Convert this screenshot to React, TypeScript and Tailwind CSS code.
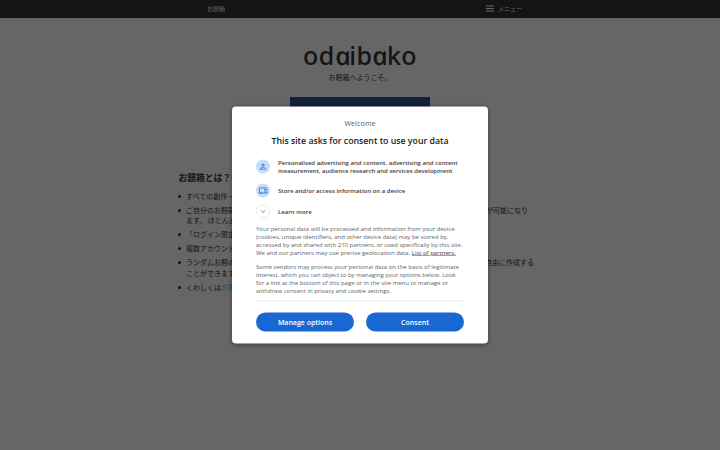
import type { ReactNode } from 'react';

const bodyLines = [
  'Your personal data will be processed and information from your device',
  '(cookies, unique identifiers, and other device data) may be stored by,',
  'accessed by and shared with 210 partners, or used specifically by this site.',
];

const vendorLines = [
  'Some vendors may process your personal data on the basis of legitimate',
  'interest, which you can object to by managing your options below. Look',
  'for a link at the bottom of this page or in the site menu to manage or',
  'withdraw consent in privacy and cookie settings.',
];

export default function App() {
  return (
    <div className="relative w-[720px] h-[450px] overflow-hidden bg-[#666666] font-['Open_Sans','Noto_Sans_CJK_JP',sans-serif]">
      <TopBar />

      <main className="flex flex-col items-center font-['Noto_Sans_CJK_JP',sans-serif] text-[#141414]">
        <Logo />
        <p className="mt-px text-[7px] leading-[10px]">お題箱へようこそ。</p>
        <div className="mt-[14.5px] w-[140px] h-[20px] bg-[#141f38]" />
        <About />
      </main>

      <div className="absolute inset-0 flex items-center justify-center">
        <ConsentDialog />
      </div>
    </div>
  );
}

function TopBar() {
  return (
    <header className="h-[17.5px] bg-[#141414] font-['Noto_Sans_CJK_JP',sans-serif] text-[#6b6b6b] text-[6px] leading-[17px] flex justify-between pl-[207px] pr-[198px]">
      <span>お題箱</span>
      <span className="flex items-center gap-[4px]">
        <svg width="8" height="7" viewBox="0 0 8 7" stroke="#6b6b6b" strokeWidth="1.1">
          <path d="M0 1h8M0 3.5h8M0 6h8" />
        </svg>
        メニュー
      </span>
    </header>
  );
}

function Logo() {
  // the upright single-storey "a" comes from the italic, skewed back
  const a = <span className="inline-block italic skew-x-[12deg] scale-x-[1.08]">a</span>;
  return (
    <h1 className="mt-[21.5px] h-[32px] leading-[32px] text-[25px] font-['Noto_Sans',sans-serif] font-medium whitespace-nowrap tracking-[0.35px]">
      od{a}ib{a}ko
    </h1>
  );
}

function About() {
  return (
    <section className="mt-[54.5px] w-[363px] text-[7px] leading-[10.4px] whitespace-nowrap">
      <h2 className="text-[8.75px] leading-[13px] font-bold">お題箱とは？</h2>
      <ul className="mt-[6.5px] ml-[7.5px] space-y-[3.65px]">
        <Item>すべての創作・</Item>
        <Item>
          <Split left="ご自分のお題箱" right="が可能になり" width="w-[342px]" />
          ます。 ほとんど
        </Item>
        <Item>「ログイン限定</Item>
        <Item>複数アカウント</Item>
        <Item>
          <Split left="ランダムお題の" right="自由に作成する" width="w-[348px]" />
          ことができます
        </Item>
        <Item>
          くわしくは<span className="text-[#0b5480]">お題箱</span>
        </Item>
      </ul>
    </section>
  );
}

function Item({ children }: { children: ReactNode }) {
  return (
    <li className="relative">
      <span className="absolute -left-[8.5px] top-[4px] size-[3px] rounded-full bg-[#141414]" />
      {children}
    </li>
  );
}

function Split({ left, right, width }: { left: string; right: string; width: string }) {
  return (
    <div className={`flex justify-between ${width}`}>
      <span>{left}</span>
      <span>{right}</span>
    </div>
  );
}

// laid out at double size and scaled down, so the small type keeps its spacing
function ConsentDialog() {
  return (
    <div className="shrink-0 scale-50 w-[512px] h-[474px] px-[48px] bg-white rounded-[8px] shadow-[0_2px_8px_rgba(0,0,0,0.4)] whitespace-nowrap">
      <p className="pt-[24px] text-center text-[14px] leading-[20px] tracking-[0.3px] text-[#55595e]">Welcome</p>
      <h2 className="mt-[11px] text-center text-[17.5px] leading-[24px] font-semibold text-[#202124]">
        This site asks for consent to use your data
      </h2>

      <div className="mt-[24px] text-[12px] leading-[16px] font-semibold text-[#3c4043]">
        <div className="h-[34px] flex items-center gap-[16px]">
          <span className="size-[28px] rounded-full bg-[#c6dcfa] flex items-center justify-center">
            <PersonIcon />
          </span>
          <p>
            Personalised advertising and content, advertising and content
            <br />
            measurement, audience research and services development
          </p>
        </div>
        <div className="mt-[17px] h-[28px] flex items-center gap-[16px]">
          <span className="size-[28px] rounded-full bg-[#c6dcfa] flex items-center justify-center">
            <DevicesIcon />
          </span>
          <p>Store and/or access information on a device</p>
        </div>
        <div className="mt-[14px] h-[28px] flex items-center gap-[16px]">
          <span className="size-[28px] rounded-full border-2 border-[#e8eaed] flex items-center justify-center">
            <svg width="12" height="12" viewBox="0 0 6 6" fill="none" stroke="#5f6368" strokeWidth="0.8">
              <path d="M1 2l2 2 2-2" />
            </svg>
          </span>
          <p>Learn more</p>
        </div>
      </div>

      <div className="mt-[12px] text-[12px] leading-[16px] text-[#5f6368]">
        {bodyLines.map((line) => (
          <p key={line}>{line}</p>
        ))}
        <p>
          We and our partners may use precise geolocation data.{' '}
          <a className="font-medium underline text-[#3c4043]">List of partners.</a>
        </p>
        <div className="mt-[12px]">
          {vendorLines.map((line) => (
            <p key={line}>{line}</p>
          ))}
        </div>
      </div>

      <div className="mt-[12px] h-[2px] bg-[#e8eaed]" />

      <div className="mt-[22px] flex gap-[24px] text-[14px] leading-[38px] font-semibold text-white">
        <button className="flex-1 h-[38px] rounded-full bg-[#1967d2]">Manage options</button>
        <button className="flex-1 h-[38px] rounded-full bg-[#1967d2]">Consent</button>
      </div>
    </div>
  );
}

function PersonIcon() {
  return (
    <svg width="18" height="18" viewBox="0 0 24 24" fill="#1967d2">
      <path d="M12 5.9a2.1 2.1 0 1 1 0 4.2 2.1 2.1 0 0 1 0-4.2m0 9c2.97 0 6.1 1.46 6.1 2.1v1.1H5.9V17c0-.64 3.13-2.1 6.1-2.1M12 4a4 4 0 1 0 0 8 4 4 0 0 0 0-8zm0 9c-2.67 0-8 1.34-8 4v3h16v-3c0-2.66-5.33-4-8-4z" />
    </svg>
  );
}

function DevicesIcon() {
  return (
    <svg width="18" height="18" viewBox="0 0 24 24" fill="#1967d2">
      <path d="M4 6h18V4H4c-1.1 0-2 .9-2 2v11H0v3h14v-3H4V6zm19 2h-6c-.55 0-1 .45-1 1v10c0 .55.45 1 1 1h6c.55 0 1-.45 1-1V9c0-.55-.45-1-1-1zm-1 9h-4v-7h4v7z" />
    </svg>
  );
}
